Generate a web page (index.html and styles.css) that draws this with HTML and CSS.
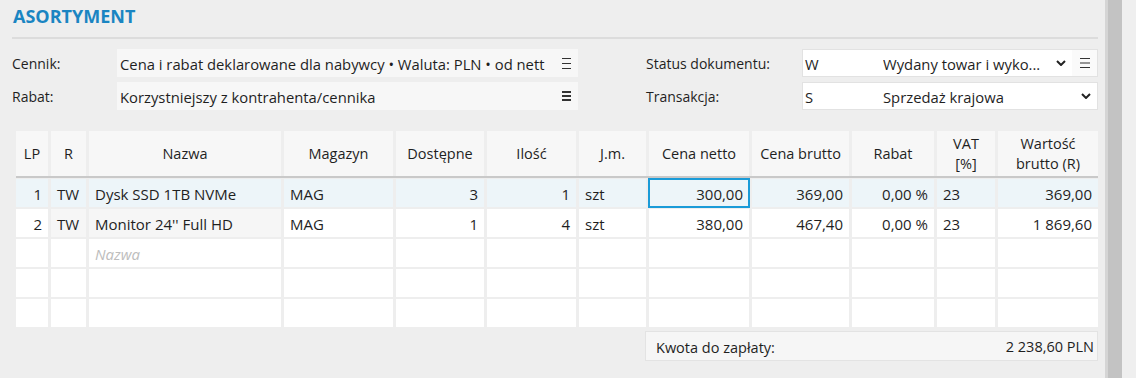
FILE: index.html
```html
<!DOCTYPE html>
<html lang="pl">
<head>
    <meta charset="UTF-8">
    <meta name="viewport" content="width=device-width, initial-scale=1.0">
    <title>Asortyment</title>
    <link rel="stylesheet" href="styles.css">
</head>
<body>
<div class="okno">
    <div class="tresc">
        <!-- Naglowek sekcji -->
        <h2 class="tytul">ASORTYMENT</h2>

        <!-- Parametry dokumentu -->
        <div class="formularz">
            <div class="etykieta">Cennik:</div>
            <div class="pole">
                <div class="pole-tekst">Cena i rabat deklarowane dla nabywcy • Waluta: PLN • od nett</div>
                <div class="pole-ikona">
                    <svg width="9" height="11" viewBox="0 0 9 11"><path d="M0 .5h9M0 5.5h9M0 10.5h9" stroke="#333" stroke-width="1" fill="none"/></svg>
                </div>
            </div>
            <div class="etykieta prawa">Status dokumentu:</div>
            <div class="wybor">
                <div class="kod">W</div>
                <div class="opis">Wydany towar i wyko...</div>
                <div class="strzalka">
                    <svg width="10" height="6" viewBox="0 0 10 6"><path d="M1 1l4 4 4-4" stroke="#222" stroke-width="2" fill="none"/></svg>
                </div>
                <div class="menu">
                    <svg width="10" height="10" viewBox="0 0 10 10"><path d="M0 .5h10M0 5h10M0 9.5h10" stroke="#333" stroke-width="1" fill="none"/></svg>
                </div>
            </div>

            <div class="etykieta">Rabat:</div>
            <div class="pole">
                <div class="pole-tekst">Korzystniejszy z kontrahenta/cennika</div>
                <div class="pole-ikona">
                    <svg width="9" height="10" viewBox="0 0 9 10"><path d="M0 1h9M0 5h9M0 9h9" stroke="#333" stroke-width="2" fill="none"/></svg>
                </div>
            </div>
            <div class="etykieta prawa">Transakcja:</div>
            <div class="wybor">
                <div class="kod">S</div>
                <div class="opis">Sprzedaż krajowa</div>
                <div class="strzalka">
                    <svg width="10" height="6" viewBox="0 0 10 6"><path d="M1 1l4 4 4-4" stroke="#222" stroke-width="2" fill="none"/></svg>
                </div>
            </div>
        </div>

        <!-- Tabela pozycji -->
        <div class="tabela">
            <div class="wiersz naglowek">
                <div class="kom">LP</div>
                <div class="kom">R</div>
                <div class="kom">Nazwa</div>
                <div class="kom">Magazyn</div>
                <div class="kom">Dostępne</div>
                <div class="kom">Ilość</div>
                <div class="kom">J.m.</div>
                <div class="kom">Cena netto</div>
                <div class="kom">Cena brutto</div>
                <div class="kom">Rabat</div>
                <div class="kom">VAT<br>[%]</div>
                <div class="kom">Wartość<br>brutto (R)</div>
            </div>

            <div class="wiersz dane zaznaczony">
                <div class="kom prawo">1</div>
                <div class="kom">TW</div>
                <div class="kom">Dysk SSD 1TB NVMe</div>
                <div class="kom">MAG</div>
                <div class="kom prawo">3</div>
                <div class="kom prawo">1</div>
                <div class="kom">szt</div>
                <div class="kom prawo aktywna">300,00</div>
                <div class="kom prawo">369,00</div>
                <div class="kom prawo">0,00 %</div>
                <div class="kom">23</div>
                <div class="kom prawo">369,00</div>
            </div>

            <div class="wiersz dane">
                <div class="kom prawo">2</div>
                <div class="kom szary">TW</div>
                <div class="kom szary">Monitor 24'' Full HD</div>
                <div class="kom">MAG</div>
                <div class="kom prawo">1</div>
                <div class="kom prawo">4</div>
                <div class="kom">szt</div>
                <div class="kom prawo">380,00</div>
                <div class="kom prawo">467,40</div>
                <div class="kom prawo">0,00 %</div>
                <div class="kom">23</div>
                <div class="kom prawo">1 869,60</div>
            </div>

            <div class="wiersz dane">
                <div class="kom"></div>
                <div class="kom"></div>
                <div class="kom podpowiedz">Nazwa</div>
                <div class="kom"></div>
                <div class="kom"></div>
                <div class="kom"></div>
                <div class="kom"></div>
                <div class="kom"></div>
                <div class="kom"></div>
                <div class="kom"></div>
                <div class="kom"></div>
                <div class="kom"></div>
            </div>

            <div class="wiersz dane">
                <div class="kom"></div>
                <div class="kom"></div>
                <div class="kom"></div>
                <div class="kom"></div>
                <div class="kom"></div>
                <div class="kom"></div>
                <div class="kom"></div>
                <div class="kom"></div>
                <div class="kom"></div>
                <div class="kom"></div>
                <div class="kom"></div>
                <div class="kom"></div>
            </div>

            <div class="wiersz dane">
                <div class="kom"></div>
                <div class="kom"></div>
                <div class="kom"></div>
                <div class="kom"></div>
                <div class="kom"></div>
                <div class="kom"></div>
                <div class="kom"></div>
                <div class="kom"></div>
                <div class="kom"></div>
                <div class="kom"></div>
                <div class="kom"></div>
                <div class="kom"></div>
            </div>
        </div>

        <!-- Podsumowanie -->
        <div class="stopka">
            <div class="podsumowanie">
                <span>Kwota do zapłaty:</span>
                <span class="kwota">2 238,60 PLN</span>
            </div>
        </div>
    </div>

    <!-- Pasek przewijania -->
    <div class="pasek"></div>
    <div class="reszta"></div>
</div>
</body>
</html>
```

FILE: styles.css
```css
/* Ustawienia ogolne */
* {
    box-sizing: border-box;
}

body {
    margin: 0;
    background-color: #eeeeee;
    font-family: "Open Sans", "Segoe UI", sans-serif;
    font-size: 14px;
    color: #1f1f1f;
}

.okno {
    display: flex;
    height: 378px;
    overflow: hidden;
}

.tresc {
    width: 1105px;
    padding: 0 7px 0 12px;
}

/* Pasek przewijania */
.pasek {
    width: 17px;
    background-color: #c3c3c3;
    border-left: 3px solid #d5d5d5;
}

.reszta {
    flex: 1;
    background-color: #efefef;
}

/* Naglowek sekcji */
.tytul {
    margin: 0;
    padding: 4px 0 9px 1px;
    font-size: 18px;
    line-height: 24px;
    font-weight: 700;
    color: #1a85c2;
    border-bottom: 2px solid #dcdcdc;
}

/* Formularz */
.formularz {
    display: grid;
    grid-template-columns: 105px 461px 68px 156px 296px;
    grid-template-rows: 28px 28px;
    row-gap: 5px;
    margin-top: 10px;
}

.etykieta {
    padding-top: 2px;
    line-height: 26px;
    white-space: nowrap;
}

.prawa {
    grid-column: 4;
}

.pole {
    display: flex;
    align-items: center;
    background-color: #f7f7f7;
}

.pole-tekst {
    flex: 1;
    overflow: hidden;
    white-space: nowrap;
    padding: 2px 0 0 3px;
    line-height: 26px;
    font-size: 14.8px;
}

.pole-ikona {
    width: 30px;
    display: flex;
    padding-left: 14px;
}

.wybor {
    display: flex;
    align-items: center;
    background-color: #ffffff;
    border: 1px solid #e2e2e2;
}

.kod {
    width: 80px;
    padding: 2px 0 0 2px;
    line-height: 24px;
    font-size: 14.8px;
}

.opis {
    flex: 1;
    overflow: hidden;
    white-space: nowrap;
    text-overflow: ellipsis;
    padding-top: 2px;
    line-height: 24px;
    font-size: 14.8px;
}

.strzalka {
    width: 22px;
    height: 100%;
    display: flex;
    align-items: center;
    justify-content: center;
}

.menu {
    width: 25px;
    height: 100%;
    display: flex;
    align-items: center;
    padding-left: 8px;
    background-color: #fafafa;
}

/* Tabela pozycji */
.tabela {
    margin: 21px 0 0 4px;
    width: 1082px;
    font-size: 15px;
}

.wiersz {
    display: grid;
    grid-template-columns: 32px 35px 192px 109px 88px 89px 67px 100px 97px 82px 58px 100px;
    column-gap: 3px;
}

.naglowek {
    height: 47px;
    border-bottom: 2px solid #c9c9c9;
    font-size: 14.5px;
}

.naglowek .kom {
    display: flex;
    align-items: center;
    justify-content: center;
    text-align: center;
    line-height: 20px;
    background-color: #f7f7f7;
}

.dane {
    height: 28px;
    margin-top: 2px;
}

.naglowek + .dane {
    margin-top: 1px;
}

.dane .kom {
    background-color: #ffffff;
    padding: 3px 6px 0;
    line-height: 25px;
    white-space: nowrap;
    overflow: hidden;
}

.dane .prawo {
    text-align: right;
}

.dane .szary {
    background-color: #f6f6f6;
}

.zaznaczony .kom {
    background-color: #edf5f9;
}

.dane .aktywna {
    outline: 2px solid #1a9bd8;
    outline-offset: -1px;
    overflow: visible;
}

.dane .podpowiedz {
    font-style: italic;
    color: #bdbdbd;
}

/* Podsumowanie */
.stopka {
    display: flex;
    justify-content: flex-end;
    margin-top: 4px;
}

.podsumowanie {
    width: 453px;
    height: 30px;
    display: flex;
    justify-content: space-between;
    padding: 4px 3px 0 10px;
    line-height: 24px;
    font-size: 14.5px;
    background-color: #f6f6f6;
    border: 1px solid #e3e3e3;
}

.kwota {
    margin-top: -1px;
}
```
